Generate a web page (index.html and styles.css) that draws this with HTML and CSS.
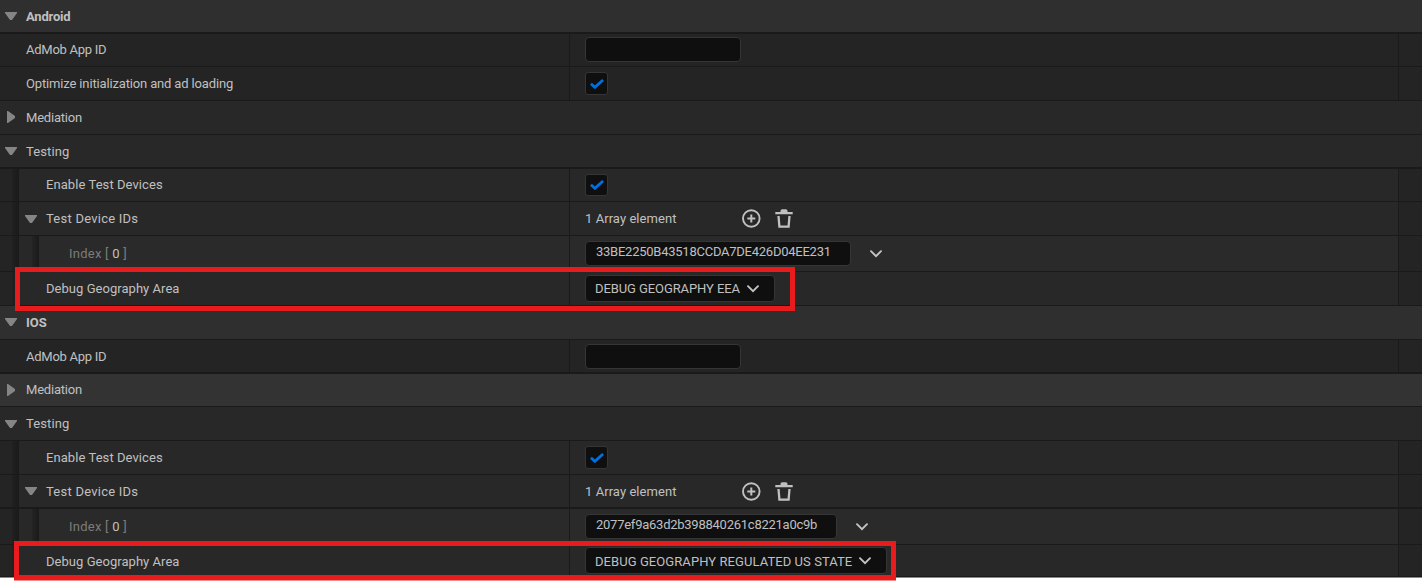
FILE: index.html
```html
<!DOCTYPE html>
<html lang="en">
<head>
<meta charset="utf-8">
<title>AdMob Settings</title>
<link rel="stylesheet" href="styles.css">
</head>
<body>
<svg class="defs" width="0" height="0">
  <symbol id="down" viewBox="0 0 12 8"><path d="M0 0h12v1L7 8H5L0 1z" fill="#858585"/></symbol>
  <symbol id="right" viewBox="0 0 8 12"><path d="M0 0h1l7 5v2l-7 5H0z" fill="#858585"/></symbol>
  <symbol id="tick" viewBox="0 0 14 10"><path d="M.9 4.700l4 3.600L13.100 1" fill="none" stroke="#0070e0" stroke-width="2.800"/></symbol>
  <symbol id="chev" viewBox="0 0 12 8"><path d="M1 1.200l5 5 5-5" fill="none" stroke="#c4c4c4" stroke-width="1.900" stroke-linecap="round"/></symbol>
  <symbol id="add" viewBox="0 0 19 19"><circle cx="9.300" cy="9.500" r="8.300" fill="none" stroke="#c0c0c0" stroke-width="1.900"/><path d="M9.300 5.500v8M5.300 9.500h8" stroke="#c0c0c0" stroke-width="2"/></symbol>
  <symbol id="trash" viewBox="0 0 18 19"><path d="M5.500 3.500V2q0-1.700 1.700-1.700h3.600q1.700 0 1.700 1.700v1.500zM.3 3h17.400v2.200H.3z" fill="#c0c0c0"/><path d="M3.500 7l.9 10.700h9.200l.9-10.700" fill="none" stroke="#c0c0c0" stroke-width="2.300"/></symbol>
</svg>
<main class="panel">
  <section class="group">
    <div class="row head thick h34"><svg class="arrow down"><use href="#down"/></svg><span class="label title t-android">Android</span></div>
    <div class="row prop h33"><div class="name"><span class="label t-app">AdMob App ID</span></div><div class="value"><span class="field empty"></span></div><div class="tail"></div></div>
    <div class="row prop h34"><div class="name"><span class="label t-opt">Optimize initialization and ad loading</span></div><div class="value"><span class="check"><svg><use href="#tick"/></svg></span></div><div class="tail"></div></div>
    <div class="row sub h34"><svg class="arrow right raised"><use href="#right"/></svg><span class="label t-med">Mediation</span></div>
    <div class="row sub thick h34"><svg class="arrow down"><use href="#down"/></svg><span class="label t-test">Testing</span></div>
    <div class="row prop nested h33"><i class="gutter"></i><div class="name"><span class="label t-en">Enable Test Devices</span></div><div class="value"><span class="check"><svg><use href="#tick"/></svg></span></div><div class="tail"></div></div>
    <div class="row prop nested h34"><i class="gutter"></i><div class="name"><svg class="arrow down"><use href="#down"/></svg><span class="label t-ids">Test Device IDs</span></div><div class="value"><span class="label count">1 Array element</span><svg class="add"><use href="#add"/></svg><svg class="trash"><use href="#trash"/></svg></div><div class="tail"></div></div>
    <div class="row prop nested deep h36"><i class="gutter"></i><i class="gutter inner"></i><div class="name"><span class="label dim t-idx">Index [ <b>0</b> ]</span></div><div class="value"><span class="field id">33BE2250B43518CCDA7DE426D04EE231</span><svg class="chev"><use href="#chev"/></svg></div><div class="tail"></div></div>
    <div class="row prop nested h34"><i class="gutter"></i><div class="name"><span class="label t-geo">Debug Geography Area</span></div><div class="value"><span class="field combo eea"><span class="label">DEBUG GEOGRAPHY EEA</span><svg class="chev"><use href="#chev"/></svg></span></div><div class="tail"></div></div>
    <div class="mark mark-android"></div>
  </section>
  <section class="group">
    <div class="row head h34"><svg class="arrow down raised"><use href="#down"/></svg><span class="label title">IOS</span></div>
    <div class="row prop thick h34"><div class="name"><span class="label t-app">AdMob App ID</span></div><div class="value"><span class="field empty"></span></div><div class="tail"></div></div>
    <div class="row sub hover h33"><svg class="arrow right"><use href="#right"/></svg><span class="label t-med">Mediation</span></div>
    <div class="row sub h34"><svg class="arrow down"><use href="#down"/></svg><span class="label t-test">Testing</span></div>
    <div class="row prop nested h34"><i class="gutter"></i><div class="name"><span class="label t-en">Enable Test Devices</span></div><div class="value"><span class="check"><svg><use href="#tick"/></svg></span></div><div class="tail"></div></div>
    <div class="row prop nested thick h34"><i class="gutter"></i><div class="name"><svg class="arrow down"><use href="#down"/></svg><span class="label t-ids">Test Device IDs</span></div><div class="value"><span class="label count">1 Array element</span><svg class="add"><use href="#add"/></svg><svg class="trash"><use href="#trash"/></svg></div><div class="tail"></div></div>
    <div class="row prop nested deep h36"><i class="gutter"></i><i class="gutter inner"></i><div class="name"><span class="label dim t-idx">Index [ <b>0</b> ]</span></div><div class="value"><span class="field id short">2077ef9a63d2b398840261c8221a0c9b</span><svg class="chev"><use href="#chev"/></svg></div><div class="tail"></div></div>
    <div class="row prop nested h32"><i class="gutter"></i><div class="name"><span class="label t-geo">Debug Geography Area</span></div><div class="value"><span class="field combo us"><span class="label">DEBUG GEOGRAPHY REGULATED US STATE</span><svg class="chev"><use href="#chev"/></svg></span></div><div class="tail"></div></div>
    <div class="mark mark-ios"></div>
  </section>
</main>
</body>
</html>
```
FILE: styles.css
```css
* { box-sizing: border-box; }
html, body { height: 100%; }
body {
  margin: 0;
  background: #fff;
  color: #c0c0c0;
  font: 13px/16px Roboto, sans-serif;
  overflow: hidden;
}
svg { display: block; flex: none; }
.defs { position: absolute; }
.panel { border-bottom: 1px solid #8a8a8a; }
.group { position: relative; }

.row { display: flex; align-items: center; border-bottom: 1px solid #1a1a1a; white-space: nowrap; }
.thick { border-bottom-width: 2px; }
.h32 { height: 32px; }
.h33 { height: 33px; }
.h34 { height: 34px; }
.h36 { height: 36px; }
.head { background: #2f2f2f; }
.sub { background: #282828; }
.hover { background: #333; }
.prop { background: #242424; align-items: stretch; }
.head, .sub { padding-left: 5px; }
.title { font-weight: 700; }
.thick .label { padding-top: 1px; }
.h32 .label { padding-top: 2px; }

.t-android { letter-spacing: -0.2px; }
.t-app { letter-spacing: -0.26px; }
.t-opt { letter-spacing: -0.15px; }
.t-med { letter-spacing: -0.2px; }
.t-test { letter-spacing: 0.1px; }
.t-en { letter-spacing: 0.07px; }
.t-ids { letter-spacing: 0.24px; }
.t-idx { letter-spacing: 0.25px; }
.t-geo { letter-spacing: 0.04px; }

.arrow.down { width: 12px; height: 8px; margin-right: 9px; }
.arrow.right { width: 8px; height: 12px; margin: 0 11px 0 2px; }
.arrow.raised { margin-bottom: 1px; }

.name { display: flex; align-items: center; width: 570px; padding-left: 26px; border-right: 1px solid #1a1a1a; }
.value { display: flex; align-items: center; flex: 1; padding-left: 15px; border-right: 1px solid #1a1a1a; }
.tail { width: 23px; background: #242424; }

.gutter { width: 19px; flex: none; background: linear-gradient(90deg, #242424 12px, #212121 12px, #1a1a1a); }
.nested .name { width: 551px; padding-left: 27px; background: #282828; }
.nested .value { background: #282828; }
.nested .arrow.down { margin: 0 9px 0 -21px; }
.gutter.inner { width: 20px; background: linear-gradient(90deg, #282828 13px, #242424 13px, #1a1a1a); }
.deep .name { width: 531px; padding-left: 30px; background: #2a2a2a; }
.deep .value { background: #2a2a2a; }
.dim { color: #7c7c7c; }
.dim b { font-weight: 400; color: #c0c0c0; }

.field { display: flex; background: #0f0f0f; border: 1px solid #353535; border-radius: 4px; height: 25px; align-items: center; }
.empty { width: 156px; }
.h33 .empty { margin-bottom: 1px; }
.id { width: 266px; padding: 0 0 3px 10px; letter-spacing: -0.25px; }
.short { width: 252px; }
.id + .chev { margin-left: 19px; }
.combo { height: 27px; padding: 0 15px 0 9px; justify-content: space-between; }
.eea { width: 190px; letter-spacing: -0.09px; }
.us { width: 302px; letter-spacing: 0.07px; }
.h32 .chev { margin-top: 1px; }
.chev { width: 12px; height: 8px; }

.check { display: flex; align-items: center; justify-content: center; width: 23px; height: 23px; background: #0f0f0f; border: 1px solid #353535; border-radius: 3px; }
.check svg { width: 14px; height: 10px; margin-top: 1px; }
.h33 .check { height: 22px; }
.h33 .check svg { margin-top: 0; }
.count { width: 157px; letter-spacing: 0.06px; }
.add { width: 19px; height: 19px; }
.trash { width: 18px; height: 19px; margin-left: 14px; }

/* highlight frames over the debug geography rows */
.mark { position: absolute; border: 5px solid #e81c1c; }
.mark-android { left: 15px; top: 267px; width: 780px; height: 44px; z-index: 1; }
.mark-ios { left: 14px; top: 235px; width: 882px; height: 39px; box-shadow: 0 1px 0 rgba(232, 28, 28, 0.5); }
```
